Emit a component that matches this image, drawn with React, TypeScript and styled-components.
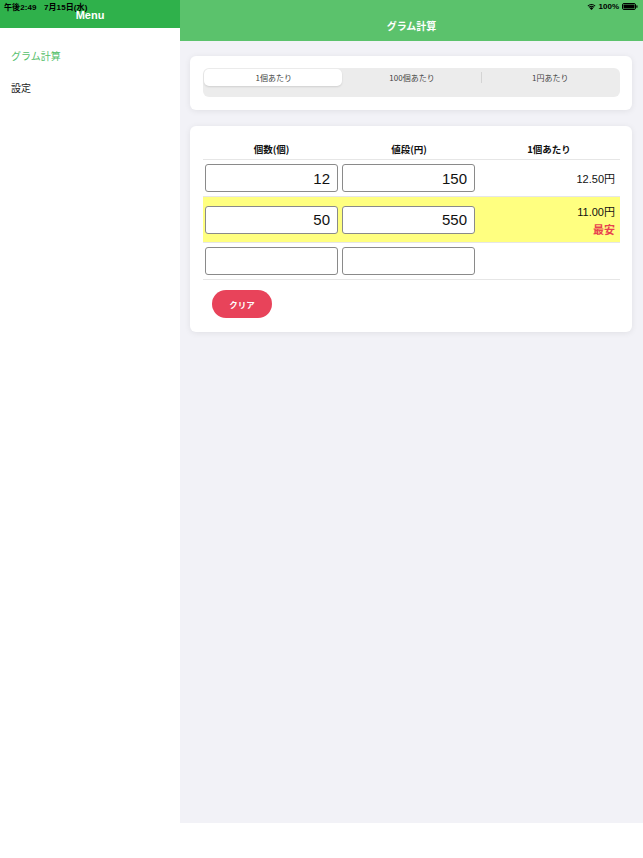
import React from 'react';
import styled, { createGlobalStyle } from 'styled-components';

// Estilos globales de la página
const GlobalStyle = createGlobalStyle`
  body {
    margin: 0;
    background: #ffffff;
    font-family: "Liberation Sans", "Noto Sans CJK JP", sans-serif;
    color: #111;
  }
`;

interface Row {
  id: number;
  count: string;
  price: string;
  unit?: string;
  cheapest?: boolean;
}

const rows: Row[] = [
  { id: 1, count: '12', price: '150', unit: '12.50円' },
  { id: 2, count: '50', price: '550', unit: '11.00円', cheapest: true },
  { id: 3, count: '', price: '' },
];

const Layout = styled.div`
  position: relative;
  display: flex;
  height: 823px;
`;

const StatusBar = styled.div`
  position: absolute;
  top: 0;
  left: 0;
  right: 0;
  height: 12px;
  display: flex;
  align-items: center;
  justify-content: space-between;
  padding: 0 5px 0 4px;
  font-size: 8px;
  font-weight: bold;
  color: #000;
  z-index: 2;
`;

const StatusTime = styled.span`
  letter-spacing: 0.1px;
  word-spacing: 5px;
`;

const StatusRight = styled.div`
  display: flex;
  align-items: center;
  gap: 3px;
`;

const Sidebar = styled.aside`
  width: 180px;
  background: #ffffff;
  display: flex;
  flex-direction: column;
`;

const SideHeader = styled.div`
  height: 28px;
  background: #2fb14b;
  color: #fff;
  font-size: 11px;
  font-weight: bold;
  display: flex;
  justify-content: center;
  padding-top: 9px;
  box-sizing: border-box;
`;

const SideItem = styled.div<{ $active?: boolean }>`
  font-family: "Noto Sans CJK JP", sans-serif;
  font-size: 10px;
  padding: 0 11px;
  height: 32px;
  line-height: 32px;
  color: ${(p) => (p.$active ? '#55c06b' : '#222')};
`;

const SideList = styled.div`
  padding-top: 12px;
`;

const Main = styled.main`
  flex: 1;
  background: #f2f2f7;
  display: flex;
  flex-direction: column;
`;

const MainHeader = styled.div`
  height: 41px;
  background: #5bc26c;
  color: #fff;
  font-family: "Noto Sans CJK JP", sans-serif;
  font-size: 10px;
  font-weight: bold;
  display: flex;
  justify-content: center;
  padding-top: 18px;
  box-sizing: border-box;
`;

const Content = styled.div`
  padding: 15px 11px 0 10px;
  display: flex;
  flex-direction: column;
  gap: 16px;
`;

const Card = styled.section<{ $pad: string }>`
  background: #fff;
  border-radius: 6px;
  box-shadow: 0 1px 6px rgba(0, 0, 0, 0.08);
  padding: ${(p) => p.$pad};
`;

const Segmented = styled.div`
  height: 29px;
  background: #ececec;
  border-radius: 6px;
  padding: 1px;
  box-sizing: border-box;
`;

const SegRow = styled.div`
  display: flex;
  height: 17px;
`;

const Segment = styled.div<{ $selected?: boolean; $divider?: boolean }>`
  flex: 1;
  display: flex;
  align-items: center;
  justify-content: center;
  font-family: "Noto Sans CJK JP", sans-serif;
  font-size: 8px;
  color: #444;
  background: ${(p) => (p.$selected ? '#fff' : 'transparent')};
  box-shadow: ${(p) => (p.$selected ? '0 1px 2px rgba(0,0,0,0.12)' : 'none')};
  border-left: ${(p) => (p.$divider ? '1px solid #d4d4d4' : '1px solid transparent')};
  border-radius: ${(p) => (p.$divider ? '0' : '5px')};
  margin: ${(p) => (p.$divider ? '3px 0' : '0')};
`;

const Grid = styled.div`
  display: grid;
  grid-template-columns: 137px 138px 1fr;
`;

const HeadCell = styled.div`
  height: 20px;
  display: flex;
  align-items: center;
  justify-content: center;
  font-family: "Noto Sans CJK JP", sans-serif;
  font-size: 9.5px;
  font-weight: bold;
  border-bottom: 1px solid #e6e6e6;
`;

const Cell = styled.div<{ $hl?: boolean; $tall?: boolean }>`
  height: ${(p) => (p.$tall ? '46px' : '37px')};
  background: ${(p) => (p.$hl ? '#ffff80' : 'transparent')};
  border-bottom: 1px solid #e6e6e6;
  display: flex;
  align-items: center;
  padding: 0 2px;
  box-sizing: border-box;
`;

const ResultCell = styled(Cell)`
  flex-direction: column;
  justify-content: center;
  align-items: flex-end;
  padding-right: 5px;
  gap: 2px;
`;

const NumberInput = styled.input`
  width: 133px;
  height: 28px;
  box-sizing: border-box;
  border: 1px solid #8a8a8a;
  border-radius: 3px;
  background: #fff;
  text-align: right;
  padding: 0 7px;
  font-family: "Liberation Sans", sans-serif;
  font-size: 15px;
  color: #111;
  outline: none;
`;

const Price = styled.span`
  font-size: 11px;
  font-family: "Liberation Sans", "Noto Sans CJK JP", sans-serif;
`;

const Cheapest = styled.span`
  font-family: "Noto Sans CJK JP", sans-serif;
  font-size: 11px;
  font-weight: bold;
  color: #e8434f;
`;

const ClearButton = styled.button`
  margin: 10px 0 0 9px;
  width: 60px;
  height: 28px;
  border: none;
  border-radius: 14px;
  background: #e8435a;
  color: #fff;
  font-family: "Noto Sans CJK JP", sans-serif;
  font-size: 8.5px;
  font-weight: bold;
`;

const WifiIcon = () => (
  <svg width="9" height="7" viewBox="0 0 18 14">
    <path d="M9 14 L5.6 10.3 A5 5 0 0 1 12.4 10.3 Z" fill="#000" />
    <path d="M3.4 8 A8 8 0 0 1 14.6 8 L13.2 9.5 A6 6 0 0 0 4.8 9.5 Z" fill="#000" />
    <path d="M1 5.4 A11.5 11.5 0 0 1 17 5.4 L15.6 6.9 A9.5 9.5 0 0 0 2.4 6.9 Z" fill="#000" />
  </svg>
);

const BatteryIcon = () => (
  <svg width="16" height="7" viewBox="0 0 16 7">
    <rect x="0.5" y="0.5" width="13" height="6" rx="1.5" fill="none" stroke="#000" />
    <rect x="1.5" y="1.5" width="11" height="4" rx="0.8" fill="#000" />
    <rect x="14.3" y="2.3" width="1.2" height="2.4" rx="0.5" fill="#000" />
  </svg>
);

// Componente principal de la pantalla de cálculo
const App: React.FC = () => {
  return (
    <>
      <GlobalStyle />
      <Layout>
        <StatusBar>
          <StatusTime>午後2:49 7月15日(水)</StatusTime>
          <StatusRight>
            <WifiIcon />
            <span>100%</span>
            <BatteryIcon />
          </StatusRight>
        </StatusBar>
        <Sidebar>
          <SideHeader>Menu</SideHeader>
          <SideList>
            <SideItem $active>グラム計算</SideItem>
            <SideItem>設定</SideItem>
          </SideList>
        </Sidebar>
        <Main>
          <MainHeader>グラム計算</MainHeader>
          <Content>
            <Card $pad="12px 12px 13px 13px">
              <Segmented>
                <SegRow>
                  <Segment $selected>1個あたり</Segment>
                  <Segment>100個あたり</Segment>
                  <Segment $divider>1円あたり</Segment>
                </SegRow>
              </Segmented>
            </Card>
            <Card $pad="13px 12px 14px 13px">
              <Grid>
                <HeadCell>個数(個)</HeadCell>
                <HeadCell>値段(円)</HeadCell>
                <HeadCell>1個あたり</HeadCell>
                {rows.map((row) => (
                  <React.Fragment key={row.id}>
                    <Cell $hl={row.cheapest} $tall={row.cheapest}>
                      <NumberInput defaultValue={row.count} />
                    </Cell>
                    <Cell $hl={row.cheapest} $tall={row.cheapest}>
                      <NumberInput defaultValue={row.price} />
                    </Cell>
                    <ResultCell $hl={row.cheapest} $tall={row.cheapest}>
                      {row.unit && <Price>{row.unit}</Price>}
                      {row.cheapest && <Cheapest>最安</Cheapest>}
                    </ResultCell>
                  </React.Fragment>
                ))}
              </Grid>
              <ClearButton>クリア</ClearButton>
            </Card>
          </Content>
        </Main>
      </Layout>
    </>
  );
};

export default App;
